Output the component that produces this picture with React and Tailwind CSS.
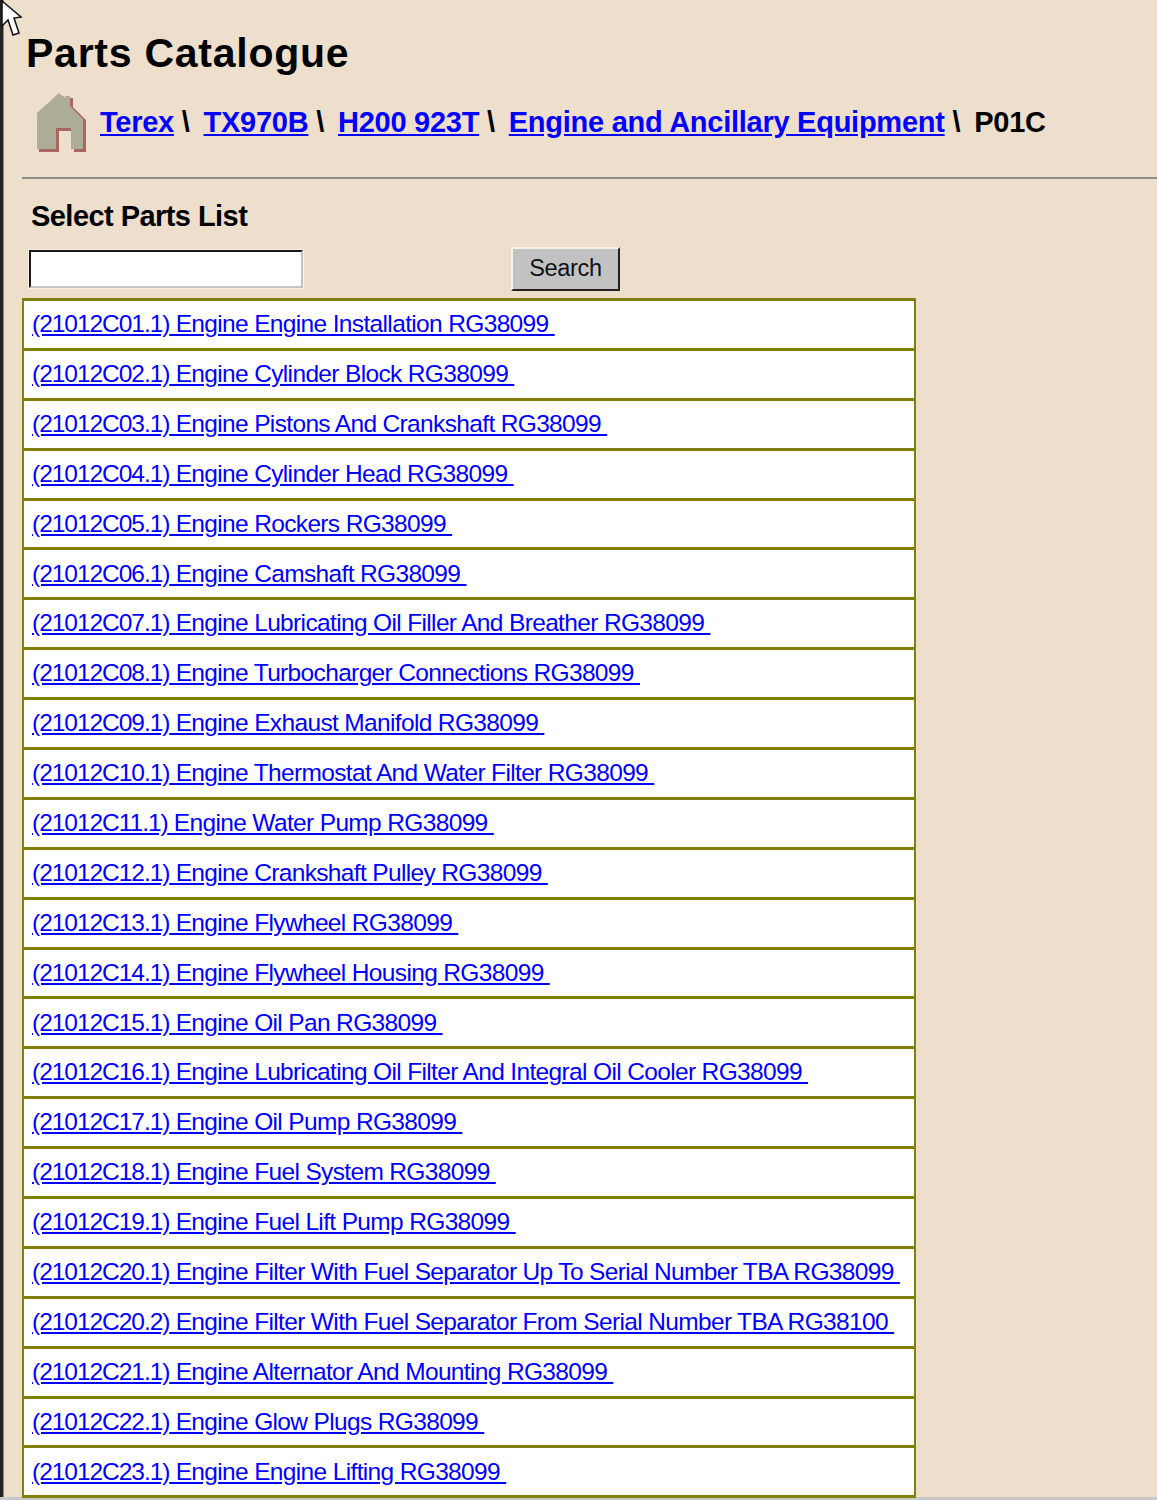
const parts = [
  ['(21012C01.1)', 'Engine Engine Installation RG38099'],
  ['(21012C02.1)', 'Engine Cylinder Block RG38099'],
  ['(21012C03.1)', 'Engine Pistons And Crankshaft RG38099'],
  ['(21012C04.1)', 'Engine Cylinder Head RG38099'],
  ['(21012C05.1)', 'Engine Rockers RG38099'],
  ['(21012C06.1)', 'Engine Camshaft RG38099'],
  ['(21012C07.1)', 'Engine Lubricating Oil Filler And Breather RG38099'],
  ['(21012C08.1)', 'Engine Turbocharger Connections RG38099'],
  ['(21012C09.1)', 'Engine Exhaust Manifold RG38099'],
  ['(21012C10.1)', 'Engine Thermostat And Water Filter RG38099'],
  ['(21012C11.1)', 'Engine Water Pump RG38099'],
  ['(21012C12.1)', 'Engine Crankshaft Pulley RG38099'],
  ['(21012C13.1)', 'Engine Flywheel RG38099'],
  ['(21012C14.1)', 'Engine Flywheel Housing RG38099'],
  ['(21012C15.1)', 'Engine Oil Pan RG38099'],
  ['(21012C16.1)', 'Engine Lubricating Oil Filter And Integral Oil Cooler RG38099'],
  ['(21012C17.1)', 'Engine Oil Pump RG38099'],
  ['(21012C18.1)', 'Engine Fuel System RG38099'],
  ['(21012C19.1)', 'Engine Fuel Lift Pump RG38099'],
  ['(21012C20.1)', 'Engine Filter With Fuel Separator Up To Serial Number TBA RG38099'],
  ['(21012C20.2)', 'Engine Filter With Fuel Separator From Serial Number TBA RG38100'],
  ['(21012C21.1)', 'Engine Alternator And Mounting RG38099'],
  ['(21012C22.1)', 'Engine Glow Plugs RG38099'],
  ['(21012C23.1)', 'Engine Engine Lifting RG38099'],
];

const crumbs = ['Terex', 'TX970B', 'H200 923T', 'Engine and Ancillary Equipment'];

const HomeIcon = () => (
  <svg width="52" height="60" viewBox="0 0 52 60" className="shrink-0">
    <path d="M2 22 L24 2 L30 7 L30 5 L36 5 L36 14 L49 27 L49 59 L37 59 L37 38 L22 38 L22 59 L2 59 Z" fill="#a9685f" transform="translate(1 1)" />
    <path d="M1 21 L23 1 L29 7 L29 4 L34 4 L34 14 L47 27 L47 57 L35 57 L35 36 L20 36 L20 57 L1 57 Z" fill="#adac96" />
  </svg>
);

const Cursor = () => (
  <svg width="24" height="38" viewBox="0 0 24 38" className="absolute left-0 top-0">
    <path d="M2 1 L2 26 L8 20 L13 35 L19 33 L14 18 L21 17 Z" fill="#fff" stroke="#111" strokeWidth="1.5" />
  </svg>
);

export default function App() {
  return (
    <div className="relative h-[1500px] overflow-hidden bg-[#eedfcc] font-['Liberation_Sans',Arial,sans-serif] text-black">
      <Cursor />
      <div className="flex h-[1497px]">
        <div className="w-[4px] shrink-0 border-r border-[#8a8a8a] bg-[#222]" />
        <div className="min-w-0 flex-1 pl-[18px]">
          {/* Header */}
          <h1 className="pl-[4px] pt-[30px] text-[41px] leading-[47px] font-bold tracking-[0.75px]">Parts Catalogue</h1>

          <div className="mt-[14px] flex h-[61px] items-center pl-[14px] text-[29px] font-bold tracking-[-0.26px]">
            <HomeIcon />
            <div className="mt-[2px] ml-[12px] flex items-center whitespace-pre">
              {crumbs.map((crumb) => (
                <span key={crumb} className="mr-[14px]">
                  <a href="#" className="text-[#0000ff] underline">{crumb}</a>
                  <span> \</span>
                </span>
              ))}
              <span>P01C</span>
            </div>
          </div>

          <div className="mt-[25px] h-[2px] bg-[#8c8c8c]" />

          <div className="mt-[21px] pl-[9px] text-[29px] leading-[33px] font-bold tracking-[-0.55px]">Select Parts List</div>

          <div className="mt-[14px] flex h-[44px] items-center pl-[7px]">
            <input
              type="text"
              className="h-[38px] w-[274px] border-2 border-t-[#1a1a1a] border-r-[#c4c4c4] border-b-[#c4c4c4] border-l-[#1a1a1a] bg-white outline outline-1 outline-[#f7f1e8]"
            />
            <button className="ml-[208px] h-[44px] w-[109px] border-2 border-t-[#f8f3ea] border-r-[#222] border-b-[#222] border-l-[#f8f3ea] bg-[#c2c2c2] text-[23.5px] tracking-[-0.3px] text-[#111]">
              Search
            </button>
          </div>

          {/* Parts list */}
          <div className="mt-[7px] w-[894px] border-x-2 border-b-[3px] border-[#80800a]">
            {parts.map(([code, name]) => (
              <div
                key={code}
                className="flex h-[49.9px] items-center border-t-[3px] border-[#80800a] bg-white pl-[8px] whitespace-pre text-[24.5px]"
              >
                <a href="#" className="text-[#0000ff] underline">
                  <span className="tracking-[-1.03px]">{code}</span>
                  <span className="tracking-[-0.65px]">{' ' + name + ' '}</span>
                </a>
              </div>
            ))}
          </div>
        </div>
      </div>
      <div className="h-[3px] bg-[#c8c8c8]" />
    </div>
  );
}
